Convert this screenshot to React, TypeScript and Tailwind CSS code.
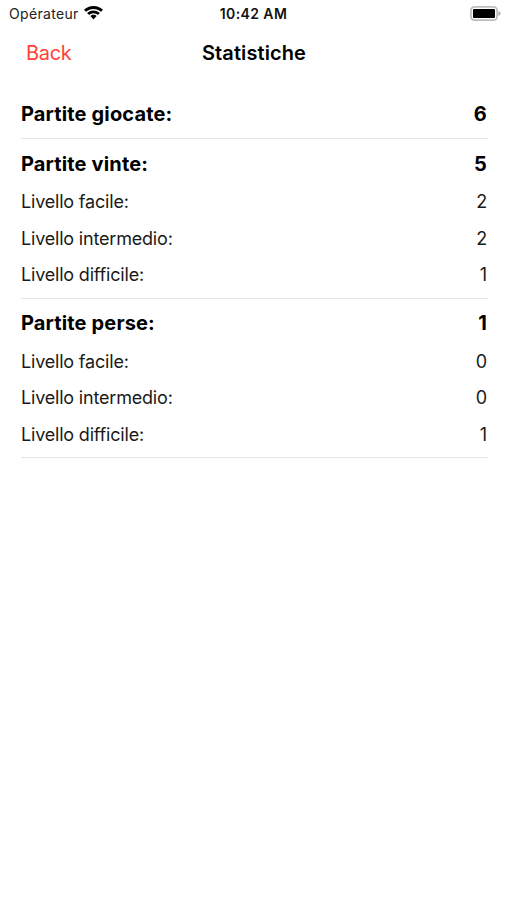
function StatusBar() {
  return (
    <div className="grid h-[26px] grid-cols-3 items-center pl-[9px] pr-[6px] text-[14px]">
      <div className="flex items-center gap-[5px] text-[#222]">
        <span className="tracking-[0.33px]">Opérateur</span>
        <svg className="text-black" width="19" height="14" viewBox="0 0 19 14" fill="currentColor">
          <path d="M9.500 0C5.800 0 2.500 1.400 0 3.700L2 5.800C4 4 6.600 2.900 9.500 2.900s5.500 1.100 7.500 2.900l2-2.100C16.500 1.400 13.200 0 9.500 0Z" />
          <path d="M9.500 4.400c-2.500 0-4.700.9-6.400 2.500l2.100 2.100c1.200-1 2.600-1.700 4.300-1.700s3.100.7 4.300 1.700l2.100-2.100c-1.700-1.600-3.900-2.500-6.400-2.500Z" />
          <path d="M9.500 8.800c-1.200 0-2.300.5-3.100 1.300l3.100 3.300 3.100-3.300c-.8-.8-1.900-1.300-3.100-1.300Z" />
        </svg>
      </div>
      <span className="-ml-[3px] text-center font-semibold tracking-[0.4px] text-[#111]">10:42 AM</span>
      <svg className="justify-self-end" width="31" height="15" viewBox="0 0 31 15">
        <rect x="0.900" y="0.900" width="26.200" height="13.200" rx="3.600" fill="none" stroke="#bdbdbd" strokeWidth="1.700" />
        <rect x="3" y="3" width="22" height="9" rx="1" />
        <path d="M28.300 5c1.300.4 2.300 1.300 2.300 2.500S29.600 9.600 28.300 10Z" fill="#b0b0b0" />
      </svg>
    </div>
  )
}

interface StatProps {
  label: string
  value: number
}

function StatHeading({ label, value }: StatProps) {
  return (
    <div className="flex h-[39.200px] items-center justify-between pr-px text-[20px] font-bold tracking-[0.15px]">
      <h2>{label}</h2>
      <span>{value}</span>
    </div>
  )
}

function StatRow({ label, value }: StatProps) {
  return (
    <div className="flex h-[36.700px] items-center justify-between pr-px text-[18px] tracking-[-0.19px] text-[#1a1a1a]">
      <span>{label}</span>
      <span>{value}</span>
    </div>
  )
}

const sections = [
  { label: 'Partite giocate:', value: 6, levels: [] },
  {
    label: 'Partite vinte:',
    value: 5,
    levels: [
      { label: 'Livello facile:', value: 2 },
      { label: 'Livello intermedio:', value: 2 },
      { label: 'Livello difficile:', value: 1 },
    ],
  },
  {
    label: 'Partite perse:',
    value: 1,
    levels: [
      { label: 'Livello facile:', value: 0 },
      { label: 'Livello intermedio:', value: 0 },
      { label: 'Livello difficile:', value: 1 },
    ],
  },
]

export default function App() {
  return (
    <div className="min-h-screen bg-white font-[Inter,sans-serif] text-black">
      <StatusBar />

      {/* Navigation bar */}
      <header className="grid h-[54px] grid-cols-3 items-center pl-[27px] pr-[26px] text-[20px]">
        <button className="-ml-px justify-self-start tracking-[-0.3px] text-[#ff4238]">Back</button>
        <h1 className="text-center font-semibold tracking-[0.1px]">Statistiche</h1>
      </header>

      {/* Statistics */}
      <main className="pl-[21px] pr-[19px] pt-[9.500px]">
        {sections.map((section) => (
          <section key={section.label} className="border-b border-[#e5e5e5] pt-[5px] pb-[4.300px]">
            <StatHeading label={section.label} value={section.value} />
            {section.levels.map((level) => (
              <StatRow key={level.label} label={level.label} value={level.value} />
            ))}
          </section>
        ))}
      </main>
    </div>
  )
}
